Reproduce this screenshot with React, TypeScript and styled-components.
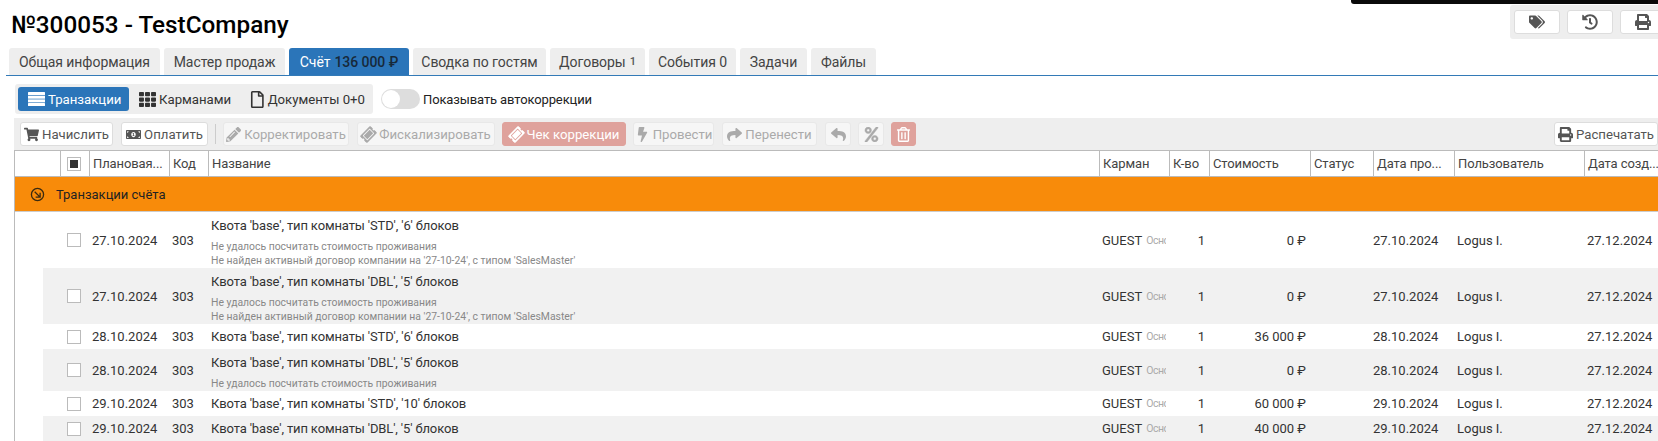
import styled, { createGlobalStyle } from "styled-components";
import {
  FaBolt,
  FaHistory,
  FaMoneyBillAlt,
  FaPencilAlt,
  FaPercent,
  FaPrint,
  FaRegFile,
  FaRegTrashAlt,
  FaReply,
  FaShare,
  FaShoppingCart,
  FaTags,
  FaTh,
  FaTicketAlt,
} from "react-icons/fa";

const GlobalStyle = createGlobalStyle`
  html, body { margin: 0; padding: 0; background: #fff; }
  body {
    width: 1658px;
    height: 441px;
    overflow: hidden;
    font-family: Roboto, "Noto Sans", sans-serif;
    font-size: 13px;
    color: #333;
  }
`;

const COLUMNS = "16px 29px 80px 39px 891px 70px 40px 101px 63px 81px 130px 75px";

const Page = styled.div`
  position: relative;
  width: 1658px;
  height: 441px;
  overflow: hidden;
`;

const LoaderBar = styled.div`
  position: absolute;
  top: 0;
  right: 0;
  width: 307px;
  height: 4px;
  background: #0a0a0a;
  border-bottom-left-radius: 3px;
`;

const Header = styled.header`
  display: flex;
  justify-content: space-between;
  height: 48px;
`;

const Title = styled.h1`
  margin: 11px 0 0 11px;
  font-size: 24.3px;
  line-height: 27px;
  font-weight: 500;
  color: #000;
`;

const HeaderTools = styled.div`
  display: flex;
  gap: 7px;
  align-self: flex-start;
  margin-top: 5px;
  margin-right: -8px;
  padding: 5px 0 5px 4px;
  height: 34px;
  box-sizing: border-box;
  background: #eee;
  border-radius: 3px 0 0 3px;
`;

const ToolButton = styled.button`
  display: flex;
  align-items: center;
  justify-content: center;
  width: 46px;
  height: 24px;
  padding: 0;
  background: #fff;
  border: 1px solid #ddd;
  border-radius: 3px;
  color: #555;
  font-size: 16px;
`;

const Tabs = styled.nav`
  display: flex;
  gap: 4px;
  height: 28px;
  margin-left: 6px;
  padding-left: 3px;
  box-sizing: border-box;
  border-bottom: 1px solid #337ab7;
`;

const Tab = styled.div<{ $active?: boolean; $width: number }>`
  width: ${(p) => p.$width}px;
  height: 27px;
  display: flex;
  align-items: center;
  justify-content: center;
  gap: 4px;
  white-space: nowrap;
  background: ${(p) => (p.$active ? "#2b75b9" : "#eee")};
  color: ${(p) => (p.$active ? "#fff" : "#444")};
  border-radius: 3px 3px 0 0;
  font-size: 14px;
  letter-spacing: -0.05px;
`;

const TabAmount = styled.b`
  color: #17293a;
  font-size: 14px;
  font-weight: 500;
`;

const TabCount = styled.sup`
  font-size: 11px;
  font-weight: 500;
  line-height: 0;
  color: #555;
`;

const ViewRow = styled.div`
  display: flex;
  align-items: center;
  margin: 8px 0 4px 15px;
  height: 30px;
`;

const ViewGroup = styled.div`
  display: flex;
  align-items: center;
  width: 358px;
  height: 30px;
  box-sizing: border-box;
  padding: 0 3px;
  background: #eee;
  border-radius: 3px;
`;

const ViewButton = styled.div<{ $active?: boolean; $width: number }>`
  display: flex;
  align-items: center;
  gap: 3px;
  width: ${(p) => p.$width}px;
  height: 24px;
  box-sizing: border-box;
  padding-left: 10px;
  white-space: nowrap;
  font-size: 13.2px;
  border-radius: 3px;
  background: ${(p) => (p.$active ? "#2b75b9" : "transparent")};
  color: ${(p) => (p.$active ? "#fff" : "#333")};
  svg {
    font-size: 17px;
  }
`;

const SwitchTrack = styled.div`
  width: 39px;
  height: 20px;
  margin-left: 8px;
  padding: 1px;
  box-sizing: border-box;
  background: #ddd;
  border-radius: 10px;
`;

const SwitchKnob = styled.div`
  width: 18px;
  height: 18px;
  background: #fff;
  border-radius: 50%;
`;

const SwitchLabel = styled.span`
  margin-left: 3px;
  font-size: 13px;
  letter-spacing: -0.12px;
  color: #222;
`;

const Toolbar = styled.div`
  display: flex;
  align-items: center;
  height: 32px;
  margin-left: 14px;
  padding-left: 6px;
  box-sizing: border-box;
  background: #eee;
`;

const ActionButton = styled.button<{ $width: number; $gap: number; $look?: "plain" | "muted" | "danger" }>`
  display: flex;
  align-items: center;
  justify-content: center;
  gap: 3px;
  flex: none;
  width: ${(p) => p.$width}px;
  height: 24px;
  margin-right: ${(p) => p.$gap}px;
  padding: 0;
  white-space: nowrap;
  font-family: inherit;
  font-size: 13.2px;
  border-radius: 3px;
  border: 1px solid
    ${(p) => (p.$look === "danger" ? "#dfa29c" : p.$look === "muted" ? "#e8e8e8" : "#ddd")};
  background: ${(p) =>
    p.$look === "danger" ? "#dfa29c" : p.$look === "muted" ? "#f6f6f6" : "#fff"};
  color: ${(p) =>
    p.$look === "danger" ? "#fff" : p.$look === "muted" ? "#aaa" : "#555"};
  svg {
    font-size: 15px;
  }
`;

const TiltedTicket = styled(FaTicketAlt)`
  transform: rotate(-45deg);
`;

const BoldPercent = styled(FaPercent)`
  stroke: currentColor;
  stroke-width: 14px;
`;

const Divider = styled.span`
  flex: none;
  width: 1px;
  height: 20px;
  margin-right: 7px;
  background: #ccc;
`;

const ToolbarSpacer = styled.span`
  flex: 1;
`;

const Table = styled.div`
  margin-left: 14px;
  border-left: 1px solid #bbb;
  width: 1644px;
`;

const HeadRow = styled.div`
  display: grid;
  grid-template-columns: 45px 29px 80px 39px 891px 70px 40px 101px 63px 81px 130px 75px;
  height: 27px;
  border-top: 1px solid #bbb;
  border-bottom: 1px solid #bbb;
  box-sizing: border-box;
`;

const HeadCell = styled.div`
  display: flex;
  align-items: center;
  padding-left: 3px;
  white-space: nowrap;
  overflow: hidden;
  font-size: 13px;
  letter-spacing: -0.1px;
  color: #444;
  box-sizing: border-box;
  & + & {
    border-left: 1px solid #bbb;
  }
`;

const GroupRow = styled.div`
  display: flex;
  align-items: center;
  gap: 11px;
  height: 35px;
  padding-left: 15px;
  background: #f88b0a;
  border-bottom: 1px solid #ccc;
  box-sizing: border-box;
  font-size: 13px;
  color: #222;
`;

const Row = styled.div<{ $height: number; $striped: boolean }>`
  display: grid;
  grid-template-columns: ${COLUMNS};
  margin-left: 28px;
  height: ${(p) => p.$height}px;
  background: ${(p) => (p.$striped ? "#f1f1f1" : "#fff")};
`;

const Cell = styled.div<{ $align?: string; $left?: number }>`
  display: flex;
  align-items: center;
  justify-content: ${(p) => p.$align || "flex-start"};
  padding-left: ${(p) => p.$left ?? 4}px;
  padding-right: ${(p) => (p.$align === "flex-end" ? 3 : 0)}px;
  white-space: nowrap;
  overflow: hidden;
  font-size: 13px;
  color: #333;
  box-sizing: border-box;
`;

const CheckCell = styled(Cell)`
  grid-column: 2;
  padding-left: 8px;
`;

const Checkbox = styled.span`
  display: block;
  width: 14px;
  height: 14px;
  box-sizing: border-box;
  background: #fff;
  border: 1px solid #bbb;
`;

const HeadCheckbox = styled(Checkbox)`
  display: flex;
  align-items: center;
  justify-content: center;
  margin-left: 3px;
  &::after {
    content: "";
    width: 8px;
    height: 8px;
    background: #333;
  }
`;

const NameCell = styled(Cell)<{ $plain: boolean }>`
  flex-direction: column;
  align-items: flex-start;
  justify-content: ${(p) => (p.$plain ? "center" : "flex-start")};
  padding-top: ${(p) => (p.$plain ? 0 : 5)}px;
`;

const NameLine = styled.div`
  line-height: 18px;
  letter-spacing: -0.13px;
`;

const Warnings = styled.div`
  margin-top: 5px;
  font-size: 10.4px;
  line-height: 14px;
  color: #888;
`;

const PocketSub = styled.span`
  display: inline-block;
  width: 20px;
  margin-left: 4px;
  overflow: hidden;
  font-size: 10.5px;
  letter-spacing: -0.5px;
  color: #aaa;
`;

const HEAD = [
  "",
  "",
  "Плановая...",
  "Код",
  "Название",
  "Карман",
  "К-во",
  "Стоимость",
  "Статус",
  "Дата про...",
  "Пользователь",
  "Дата созд...",
];

const W1 = "Не удалось посчитать стоимость проживания";
const W2 = (d: string) => `Не найден активный договор компании на '${d}', с типом 'SalesMaster'`;

const ROWS = [
  { h: 56, date: "27.10.2024", name: "Квота 'base', тип комнаты 'STD', '6' блоков", warn: [W1, W2("27-10-24")], cost: "0 ₽" },
  { h: 56, date: "27.10.2024", name: "Квота 'base', тип комнаты 'DBL', '5' блоков", warn: [W1, W2("27-10-24")], cost: "0 ₽" },
  { h: 25, date: "28.10.2024", name: "Квота 'base', тип комнаты 'STD', '6' блоков", warn: [], cost: "36 000 ₽" },
  { h: 42, date: "28.10.2024", name: "Квота 'base', тип комнаты 'DBL', '5' блоков", warn: [W1], cost: "0 ₽" },
  { h: 25, date: "29.10.2024", name: "Квота 'base', тип комнаты 'STD', '10' блоков", warn: [], cost: "60 000 ₽" },
  { h: 25, date: "29.10.2024", name: "Квота 'base', тип комнаты 'DBL', '5' блоков", warn: [], cost: "40 000 ₽" },
];

const App = () => {
  return (
    <Page>
      <GlobalStyle />
      <LoaderBar />
      <Header>
        <Title>№300053 - TestCompany</Title>
        <HeaderTools>
          <ToolButton><FaTags /></ToolButton>
          <ToolButton><FaHistory /></ToolButton>
          <ToolButton><FaPrint /></ToolButton>
        </HeaderTools>
      </Header>

      <Tabs>
        <Tab $width={151}>Общая информация</Tab>
        <Tab $width={121}>Мастер продаж</Tab>
        <Tab $width={120} $active>Счёт <TabAmount>136 000 ₽</TabAmount></Tab>
        <Tab $width={133}>Сводка по гостям</Tab>
        <Tab $width={95}>Договоры <TabCount>1</TabCount></Tab>
        <Tab $width={87}>События 0</Tab>
        <Tab $width={67}>Задачи</Tab>
        <Tab $width={65}>Файлы</Tab>
      </Tabs>

      <ViewRow>
        <ViewGroup>
          <ViewButton $active $width={111}>
            <svg width="17" height="14" viewBox="0 0 17 14" fill="currentColor">
              <rect y="0" width="17" height="3" rx="0.5" />
              <rect y="3.7" width="17" height="3" />
              <rect y="7.4" width="17" height="3" />
              <rect y="11.1" width="17" height="2.9" rx="0.5" />
            </svg>
            Транзакции
          </ViewButton>
          <ViewButton $width={111}><FaTh /> Карманами</ViewButton>
          <ViewButton $width={125}><FaRegFile /> Документы 0+0</ViewButton>
        </ViewGroup>
        <SwitchTrack><SwitchKnob /></SwitchTrack>
        <SwitchLabel>Показывать автокоррекции</SwitchLabel>
      </ViewRow>

      <Toolbar>
        <ActionButton $width={93} $gap={8}><FaShoppingCart /> Начислить</ActionButton>
        <ActionButton $width={87} $gap={7}><FaMoneyBillAlt /> Оплатить</ActionButton>
        <Divider />
        <ActionButton $look="muted" $width={126} $gap={8}><FaPencilAlt /> Корректировать</ActionButton>
        <ActionButton $look="muted" $width={138} $gap={7}><TiltedTicket /> Фискализировать</ActionButton>
        <ActionButton $look="danger" $width={124} $gap={7}><TiltedTicket /> Чек коррекции</ActionButton>
        <ActionButton $look="muted" $width={81} $gap={8}><FaBolt /> Провести</ActionButton>
        <ActionButton $look="muted" $width={95} $gap={8}><FaShare /> Перенести</ActionButton>
        <ActionButton $look="muted" $width={26} $gap={7}><FaReply /></ActionButton>
        <ActionButton $look="muted" $width={26} $gap={7}><BoldPercent /></ActionButton>
        <ActionButton $look="danger" $width={25} $gap={0}><FaRegTrashAlt /></ActionButton>
        <ToolbarSpacer />
        <ActionButton $width={104} $gap={0}><FaPrint /> Распечатать</ActionButton>
      </Toolbar>

      <Table>
        <HeadRow>
          {HEAD.map((title, i) => (
            <HeadCell key={i}>{i === 1 ? <HeadCheckbox /> : title}</HeadCell>
          ))}
        </HeadRow>
        <GroupRow>
          <svg width="15" height="15" viewBox="0 0 16 16" fill="none" stroke="#3a2a10" strokeWidth="1.4">
            <circle cx="8" cy="8" r="6.5" />
            <path d="M5 5l5.5 5.5M6 10.8h4.8V6" />
          </svg>
          Транзакции счёта
        </GroupRow>
        {ROWS.map((row, i) => (
          <Row key={i} $height={row.h} $striped={i % 2 === 1}>
            <CheckCell><Checkbox /></CheckCell>
            <Cell>{row.date}</Cell>
            <Cell>303</Cell>
            <NameCell $plain={row.warn.length === 0}>
              <NameLine>{row.name}</NameLine>
              {row.warn.length > 0 && (
                <Warnings>
                  {row.warn.map((w) => (
                    <div key={w}>{w}</div>
                  ))}
                </Warnings>
              )}
            </NameCell>
            <Cell>GUEST<PocketSub>Основной</PocketSub></Cell>
            <Cell $align="flex-end">1</Cell>
            <Cell $align="flex-end">{row.cost}</Cell>
            <Cell />
            <Cell $left={1}>{row.date}</Cell>
            <Cell>Logus I.</Cell>
            <Cell>27.12.2024</Cell>
          </Row>
        ))}
      </Table>
    </Page>
  );
};

export default App;
